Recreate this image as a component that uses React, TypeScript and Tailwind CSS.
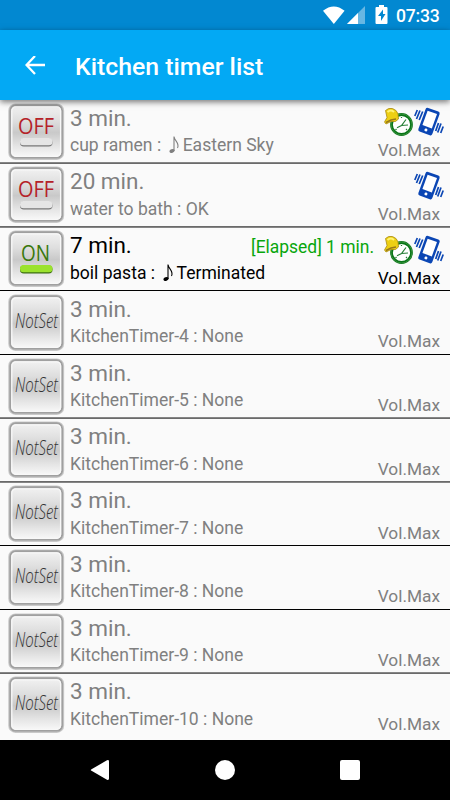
import React from "react";

type Status = "OFF" | "ON" | "NotSet";
type Timer = {
  time: string;
  name: string;
  sound: string;
  note?: boolean;
  status: Status;
  alarm?: boolean;
  vibrate?: boolean;
  elapsed?: string;
  line?: string;
  height: string;
  lift?: boolean;
};

const softA = "h-[2px] bg-linear-to-b from-[#858585] from-50% to-[#6a6a6a] to-50%";
const softB = "h-[2px] bg-linear-to-b from-[#6a6a6a] from-50% to-[#858585] to-50%";
const solid = "h-px bg-black";

const timers: Timer[] = [
  { time: "3 min.", name: "cup ramen", sound: "Eastern Sky", note: true, status: "OFF", alarm: true, vibrate: true, line: softA, height: "h-[64px]" },
  { time: "20 min.", name: "water to bath", sound: "OK", status: "OFF", vibrate: true, line: softB, height: "h-[64px]", lift: true },
  { time: "7 min.", name: "boil pasta", sound: "Terminated", note: true, status: "ON", alarm: true, vibrate: true, elapsed: "[Elapsed] 1 min.", line: solid, height: "h-[63px]", lift: true },
  { time: "3 min.", name: "KitchenTimer-4", sound: "None", status: "NotSet", line: solid, height: "h-[64px]" },
  { time: "3 min.", name: "KitchenTimer-5", sound: "None", status: "NotSet", line: softA, height: "h-[64px]" },
  { time: "3 min.", name: "KitchenTimer-6", sound: "None", status: "NotSet", line: softB, height: "h-[64px]", lift: true },
  { time: "3 min.", name: "KitchenTimer-7", sound: "None", status: "NotSet", line: solid, height: "h-[63px]", lift: true },
  { time: "3 min.", name: "KitchenTimer-8", sound: "None", status: "NotSet", line: solid, height: "h-[64px]" },
  { time: "3 min.", name: "KitchenTimer-9", sound: "None", status: "NotSet", line: softA, height: "h-[64px]" },
  { time: "3 min.", name: "KitchenTimer-10", sound: "None", status: "NotSet", height: "h-[66px]", lift: true },
];

function StatusBar() {
  return (
    <div className="flex h-[30px] items-center justify-end bg-[#0288d1] pr-[9px] text-white">
      <svg className="h-[30px] w-[66px]" viewBox="0 0 66 30">
        <path d="M0 10.8Q10.8 2.2 21.6 10.8L10.8 24Z" fill="#fff" />
        <path d="M42 6V24H24Z" fill="#fff" opacity=".4" />
        <path d="M35 13V24H24Z" fill="#fff" />
        <path fillRule="evenodd" d="M56 5h5v2h2.500q1 0 1 1v15q0 1-1 1H53.500q-1 0-1-1V8q0-1 1-1H56ZM60 9.500L55 16h3v5l4.500-7H60Z" fill="#fff" />
      </svg>
      <span className="ml-[7px] w-[45px] whitespace-nowrap pt-[2px] text-[17.600px] font-medium leading-[30px] tracking-[-0.200px]">07:33</span>
    </div>
  );
}

function Note() {
  return (
    <svg className="ml-[7.500px] mr-[2px] h-[18px] w-[12px]" viewBox="0 0 12 18" fill="none" stroke="currentColor">
      <ellipse cx="3" cy="15" rx="2.600" ry="1.800" fill="currentColor" stroke="none" transform="rotate(-20 3 15)" />
      <path d="M5 15V.500C5.500 5 11 7 8.500 12" strokeWidth="1.100" />
    </svg>
  );
}

function AlarmIcon() {
  return (
    <svg className="h-[30px] w-[30px]" viewBox="0 0 30 30">
      <circle cx="17.500" cy="17.500" r="10" fill="#fff" stroke="#087517" strokeWidth="2.800" />
      <circle cx="17.500" cy="17.500" r="10.500" fill="none" stroke="#58a356" strokeWidth=".6" />
      <path d="M13 20.800L17.500 18.500L22 12.500M17.500 18.500L24 18M11.500 23l1-1M17.500 10v1M23 23l-1-1" fill="none" stroke="#267f36" strokeWidth="1.200" />
      <path d="M1.500 3.500Q4.500 .500 8.500 1.500Q13 3 14 7L14.500 12L11.500 14.500L7 14.500L2 17L.500 15L3 10.500Z" fill="#edcf13" stroke="#a98b16" strokeWidth=".8" />
      <path d="M3.500 5Q7 2 10 5" stroke="#fff476" strokeWidth="2" fill="none" />
      <path d="M2 15.500L7 13L12 12" stroke="#987819" strokeWidth="1.400" fill="none" />
    </svg>
  );
}

function VibrateIcon() {
  return (
    <svg className="h-[30px] w-[30px]" viewBox="0 0 30 30" fill="none" stroke="#0b46b4">
      <g transform="rotate(20 15 14.500)">
        <rect x="7.600" y="2" width="14.800" height="25.200" rx="2" fill="#0b46b4" stroke="none" />
        <rect x="10" y="4.800" width="10" height="15.200" fill="#fff" stroke="none" />
        <circle cx="15" cy="23.500" r="1.500" fill="#fff" stroke="none" />
      </g>
      <path d="M3.300 3L.800 9M6 3.500L2.500 12M8.700 4.500L5.200 13M29.200 19.500L26.700 26M27 16.500L23.700 25.500M24.500 16L21.700 24" strokeWidth="1.700" />
    </svg>
  );
}

function StatusButton({ status }: { status: Status }) {
  return (
    <svg className="ml-[8px] mt-[2.500px] h-[57px] w-[56px] shrink-0 overflow-visible" viewBox="0 0 56 57">
      <defs>
        <linearGradient id="metal" x1="0" y1="0" x2="0" y2="1">
          <stop offset="0" stopColor="#f2f2f2" />
          <stop offset=".3" stopColor="#dedede" />
          <stop offset=".52" stopColor="#c9c9c9" />
          <stop offset=".78" stopColor="#e5e5e5" />
          <stop offset="1" stopColor="#fafafa" />
        </linearGradient>
      </defs>
      <rect x="1" y="1.200" width="54.400" height="55" rx="6.500" fill="#fff" stroke="#c9c9c9" strokeWidth="1.500" />
      <rect x="2.200" y="2.300" width="52" height="52.600" rx="5.500" fill="url(#metal)" stroke="#a0a0a0" strokeWidth="1.900" />
      <rect x="3.800" y="3.900" width="48.800" height="49.400" rx="4" fill="none" stroke="#f8f8f8" strokeWidth="1.300" />
      {status === "NotSet" ? (
        <text x="28.500" y="34" textAnchor="middle" textLength="43" lengthAdjust="spacingAndGlyphs" fontFamily="Open Sans" fontStyle="italic" fontWeight="300" fontSize="20" fill="#333">NotSet</text>
      ) : (
        <>
          <text x={status === "OFF" ? 28 : 27.500} y="31" textAnchor="middle" textLength={status === "OFF" ? 36 : 29} lengthAdjust="spacingAndGlyphs" fontFamily="Open Sans" fontSize="21" fill={status === "OFF" ? "#b52128" : "#39780c"}>{status}</text>
          <rect x="12" y="35.500" width="32.500" height="8" rx="3.800" fill={status === "OFF" ? "#777" : "#3d6e13"} />
          <rect x="12" y="35" width="32.500" height="7.300" rx="3.600" fill={status === "OFF" ? "#e5e5e5" : "#9be22d"} />
        </>
      )}
    </svg>
  );
}

function Row({ timer }: { timer: Timer }) {
  return (
    <div className={`flex flex-col ${timer.height} ${timer.status === "ON" ? "text-black" : "text-[#808080]"}`}>
      <div className={`flex min-h-0 flex-1 ${timer.lift ? "-mt-[0.500px]" : ""}`}>
        <StatusButton status={timer.status} />
        <div className="ml-[6px] flex-1 whitespace-nowrap">
          <div className="flex h-[33px] items-center justify-between pt-[2px]">
            <span className="text-[22.500px] leading-[28px]">{timer.time}</span>
            {timer.elapsed && <span className="mr-[2px] pt-[3px] text-[17.450px] leading-[22px] text-[#08a60c]">{timer.elapsed}</span>}
          </div>
          <div className="flex h-[24px] items-center text-[17.550px] leading-[24px]">
            <span>{timer.name} :{timer.note ? "" : ` ${timer.sound}`}</span>
            {timer.note && <><Note /><span>{timer.sound}</span></>}
          </div>
        </div>
        <div className="flex w-[74px] shrink-0 flex-col items-end pr-[10px]">
          <div className="mr-[-4px] flex h-[40px] pt-[7px]">
            {timer.alarm && <AlarmIcon />}
            {timer.vibrate && <VibrateIcon />}
          </div>
          <span className="text-[17.300px] leading-[20px]">Vol.Max</span>
        </div>
      </div>
      {timer.line && <div className={`shrink-0 ${timer.line}`} />}
    </div>
  );
}

export default function App() {
  return (
    <main className="flex h-[800px] w-[450px] flex-col overflow-hidden bg-[#fafafa] font-['Roboto',sans-serif]">
      <StatusBar />
      <header className="z-10 flex h-[70px] shrink-0 items-center bg-[#03a9f4] pl-[25px] pt-[2px] text-white shadow-[0_2px_6px_#0008]">
        <svg className="h-[20px] w-[20px]" viewBox="0 0 20 20" fill="none" stroke="currentColor" strokeWidth="2.300">
          <path d="M20 9H2M10 0L1.500 9L10 18" />
        </svg>
        <h1 className="ml-[30px] pt-[2px] text-[24.800px] font-medium leading-[34px]">Kitchen timer list</h1>
      </header>
      <section className="flex h-[640px] shrink-0 flex-col">
        {timers.map((timer) => <Row key={timer.name} timer={timer} />)}
      </section>
      <nav className="flex h-[60px] shrink-0 items-center bg-black">
        <svg className="ml-[90px] h-[20px] w-[20px]" viewBox="0 0 20 20"><path d="M1.500 9.200L17 .300Q19 -.500 19 1.500V18.500Q19 20.500 17 19.700L1.500 10.800Q0 10 1.500 9.200Z" fill="#fff" /></svg>
        <div className="ml-[105px] h-[20px] w-[20px] rounded-full bg-white" />
        <div className="ml-[105px] h-[20px] w-[20px] rounded-[2px] bg-white" />
      </nav>
    </main>
  );
}
